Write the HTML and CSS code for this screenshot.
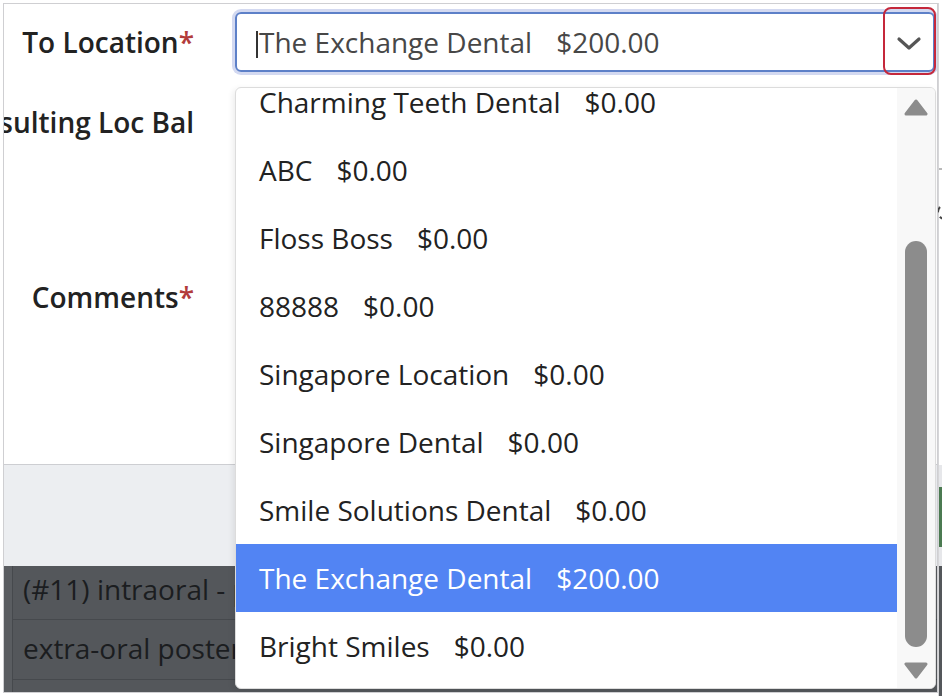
FILE: index.html
```html
<!DOCTYPE html>
<html lang="en">
<head>
<meta charset="utf-8">
<title>Transfer</title>
<link rel="stylesheet" href="styles.css">
</head>
<body>
<div class="screen">
  <div class="frame">
    <div class="modal-body">
      <div class="label row1"><span class="ltext">To Location<span class="req">*</span></span></div>
      <div class="field row1">
        <div class="input">
          <span class="caret"></span>
          <span class="val">The Exchange Dental<span class="amt">$200.00</span></span>
          <svg class="chev" width="26" height="16" viewBox="0 0 26 16"><path d="M3 3 L13 12 L23 3" fill="none" stroke="#555" stroke-width="3.2" stroke-linecap="round" stroke-linejoin="round"/></svg>
        </div>
      </div>
      <div class="label row2"><span class="ltext">Resulting Loc Bal</span></div>
      <div class="field row2"></div>
      <div class="label row3"><span class="ltext">Comments<span class="req">*</span></span></div>
      <div class="field row3"></div>
    </div>
    <div class="modal-footer"></div>
    <div class="under">
      <div class="urow r1"><span>(#11) intraoral - periapical first film</span></div>
      <div class="urow r2"><span>extra-oral posterior dental radiographic image</span></div>
      <div class="urow r3"></div>
    </div>

    <div class="dropdown">
      <ul class="opts">
        <li>Charming Teeth Dental<span class="amt">$0.00</span></li>
        <li>ABC<span class="amt">$0.00</span></li>
        <li>Floss Boss<span class="amt">$0.00</span></li>
        <li>88888<span class="amt">$0.00</span></li>
        <li>Singapore Location<span class="amt">$0.00</span></li>
        <li>Singapore Dental<span class="amt">$0.00</span></li>
        <li>Smile Solutions Dental<span class="amt">$0.00</span></li>
        <li class="sel">The Exchange Dental<span class="amt">$200.00</span></li>
        <li>Bright Smiles<span class="amt">$0.00</span></li>
      </ul>
      <div class="sbar">
        <svg class="arr" width="24" height="18" viewBox="0 0 24 18"><path d="M12 2 L22 15 L2 15 Z" fill="#8c8c8c" stroke="#8c8c8c" stroke-width="3" stroke-linejoin="round"/></svg>
        <div class="track"><div class="thumb"></div></div>
        <svg class="arr" width="24" height="18" viewBox="0 0 24 18"><path d="M2 3 L22 3 L12 16 Z" fill="#8c8c8c" stroke="#8c8c8c" stroke-width="3" stroke-linejoin="round"/></svg>
      </div>
    </div>
    <div class="annot"></div>
  </div>
  <div class="peek">
    <div class="p-white"><div class="p-line"></div><div class="p-circle"></div></div>
    <div class="p-foot"><div class="p-btn"></div></div>
    <div class="p-dark"></div>
  </div>
</div>
</body>
</html>
```

FILE: styles.css
```css
* { box-sizing: border-box; }
html, body { margin: 0; padding: 0; background: #fff; }
body { font-family: "Open Sans", "Noto Sans", sans-serif; }

.screen {
  width: 942px;
  height: 696px;
  overflow: hidden;
  display: flex;
  padding: 3px 0 0 3px;
  background: #fff;
}

.frame {
  position: relative;
  width: 935px;
  height: 690px;
  flex: none;
  border: 1px solid #cfcfd2;
  overflow: hidden;
  display: flex;
  flex-direction: column;
}

.modal-body {
  height: 461px;
  flex: none;
  border-bottom: 1px solid #cdced2;
  display: grid;
  grid-template-columns: 192px 700px;
  grid-template-rows: 60px 60px 250px;
  column-gap: 39px;
  row-gap: 20px;
  padding-top: 8px;
  align-content: start;
}

.label {
  display: flex;
  justify-content: flex-end;
  font-weight: 600;
  font-size: 28px;
  color: #222;
  white-space: nowrap;
  align-self: center;
  line-height: 36px;
  padding-right: 2px;
}
.ltext { flex: none; }
.label.row3 { align-self: start; padding-top: 107px; }
.req { color: #b23b3b; }

.field { min-width: 0; }

.input {
  position: relative;
  height: 60px;
  border: 2px solid #5d80c8;
  border-radius: 6px;
  box-shadow: 0 0 0 3px #d3d9f1;
  display: flex;
  align-items: center;
  padding-left: 22px;
  font-size: 28px;
  color: #474747;
}
.caret {
  position: absolute;
  left: 19px;
  top: 17px;
  width: 2px;
  height: 27px;
  background: #333;
}
.val { white-space: pre; }
.amt { margin-left: 24px; }
.chev { position: absolute; right: 11px; top: 22px; }

.modal-footer {
  height: 101px;
  flex: none;
  background: #eceef1;
}

.under {
  flex: 1;
  background: #54575b;
  border-left: 8px solid #5a5d61;
  font-size: 28px;
  color: #1b1d20;
}
.urow {
  border-left: 1px solid #46494d;
  border-bottom: 1px solid #46494d;
  padding-left: 10px;
  white-space: nowrap;
  display: flex;
  align-items: center;
}
.urow.r1 { height: 54px; padding-bottom: 8px; }
.urow.r2 { height: 60px; padding-bottom: 4px; }
.urow.r3 { height: 12px; border-bottom: 0; }

.dropdown {
  position: absolute;
  left: 231px;
  top: 83px;
  width: 701px;
  height: 602px;
  background: #fff;
  border: 1px solid #dcdcdc;
  border-radius: 6px;
  box-shadow: -2px 2px 6px rgba(0,0,0,0.08);
  overflow: hidden;
  display: flex;
}
.opts {
  list-style: none;
  margin: -20px 0 0 0;
  padding: 0;
  width: 661px;
  flex: none;
}
.opts li {
  height: 68px;
  display: flex;
  align-items: center;
  padding-left: 23px;
  font-size: 28px;
  color: #222;
  white-space: nowrap;
}
.opts li.sel { background: #5284f3; color: #fff; }

.sbar {
  flex: 1;
  background: #f8f8f8;
  display: flex;
  flex-direction: column;
  align-items: center;
  padding: 11px 0 9px 0;
}
.track {
  flex: 1;
  width: 22px;
  display: flex;
  flex-direction: column;
  justify-content: flex-end;
  padding: 124px 0 14px 0;
}
.thumb {
  flex: 1;
  background: #8c8c8c;
  border-radius: 11px;
}

.annot {
  position: absolute;
  left: 879px;
  top: 3px;
  width: 53px;
  height: 68px;
  border: 2.5px solid #c5283b;
  border-radius: 8px;
}

.peek {
  flex: 1;
  display: flex;
  flex-direction: column;
  border-left: 1px solid #d6d6d8;
}
.p-white { height: 462px; background: #fff; padding-top: 165px; }
.p-line { height: 2px; background: #b9b9b9; }
.p-circle {
  margin-top: 34px;
  margin-left: -2px;
  width: 16px;
  height: 16px;
  border: 2px dashed #444;
  border-radius: 50%;
}
.p-foot { height: 101px; background: #e6e7ea; padding-top: 22px; }
.p-btn { height: 60px; background: #4b7a51; }
.p-dark { flex: 1; background: #54575b; }
```
